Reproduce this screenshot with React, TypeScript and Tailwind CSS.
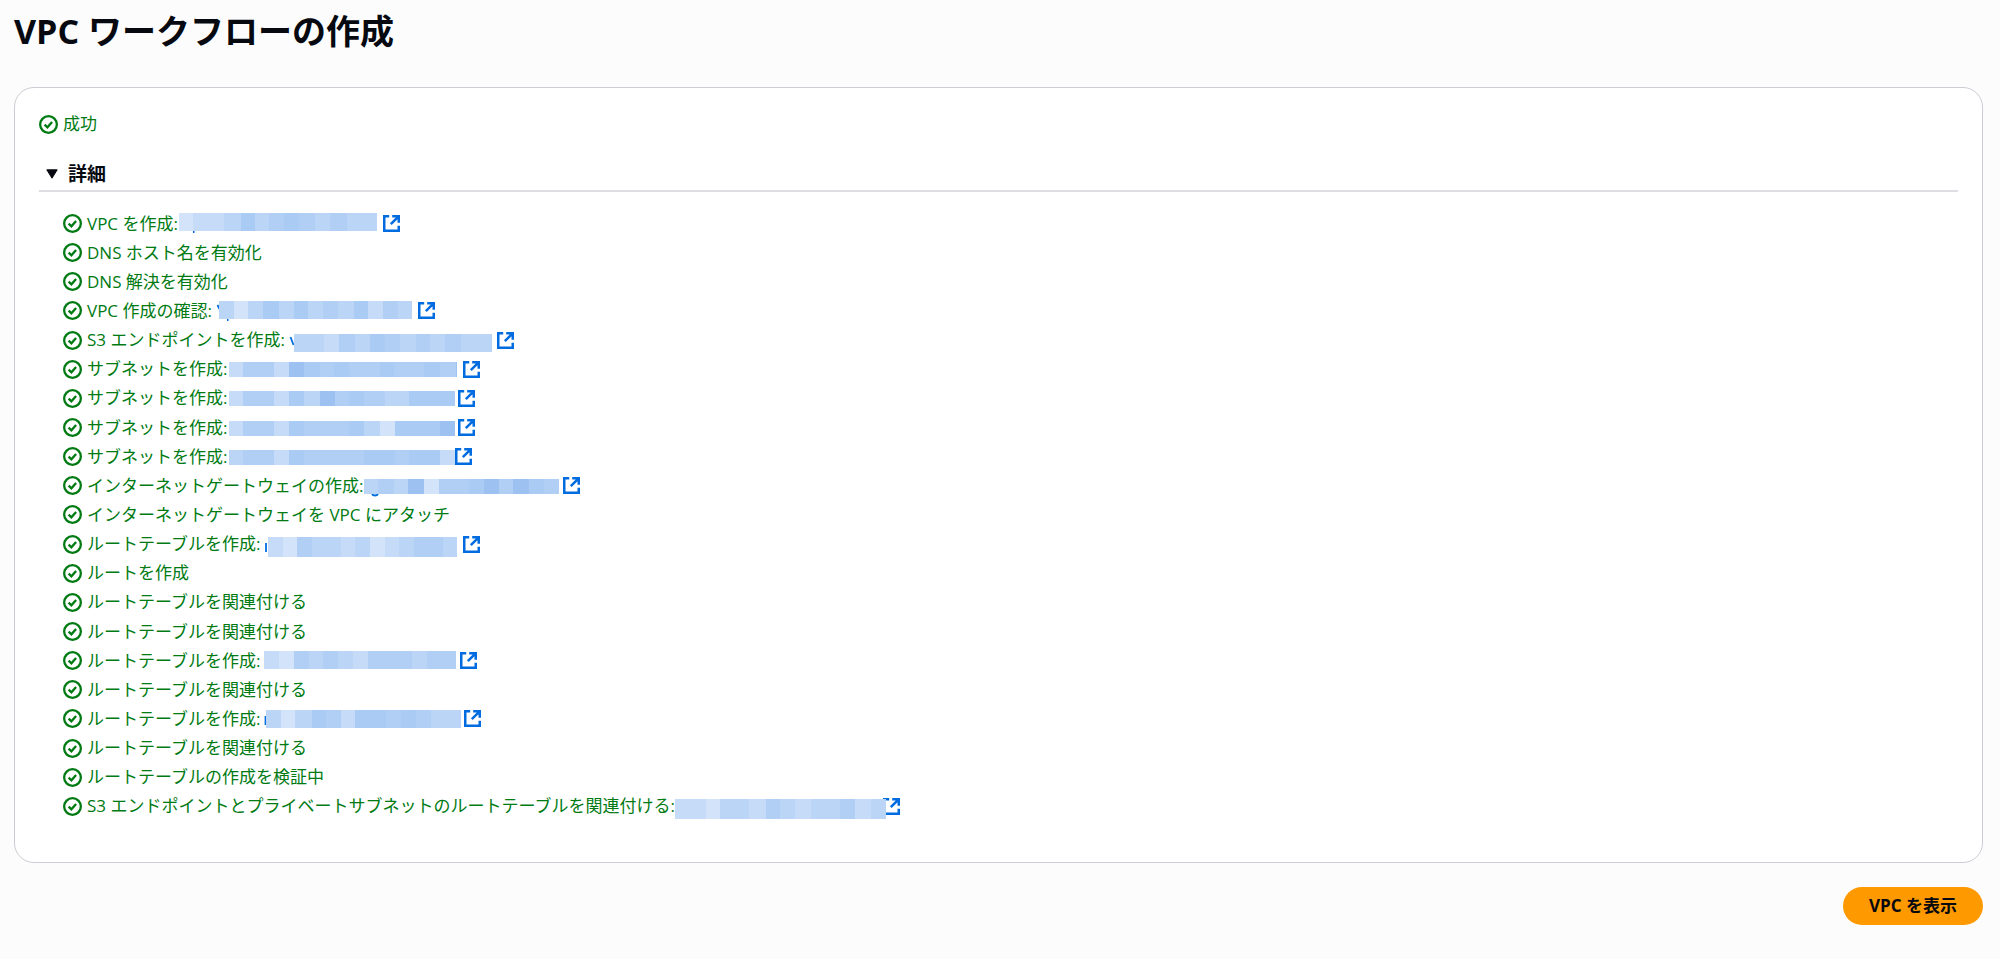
import React from "react";

type Cell = [edge: number, tone: string];

interface Masked {
  origin: number;
  top: number;
  height: number;
  cells: Cell[];
  end: number;
  iconAt: number;
  trace?: string;
}

interface Step {
  label: string;
  masked?: Masked;
}

const tones: Record<string, string> = {
  a: "#d3e4fa",
  b: "#c6dbf8",
  c: "#bbd5f6",
  d: "#b1cff5",
  e: "#a9cbf4",
  f: "#9dc2f1",
};

const steps: Step[] = [
  {
    label: "VPC を作成:",
    masked: {
      origin: 183, top: 4, height: 18, end: 377, iconAt: 383, trace: "M193 23h1.5",
      cells: [[179, "a"], [193, "b"], [209, "b"], [224, "c"], [241, "e"], [255, "c"], [269, "d"], [284, "e"], [299, "d"], [315, "c"], [330, "d"], [347, "c"]],
    },
  },
  { label: "DNS ホスト名を有効化" },
  { label: "DNS 解決を有効化" },
  {
    label: "VPC 作成の確認:",
    masked: {
      origin: 217, top: 5, height: 18, end: 412, iconAt: 418, trace: "M217.5 9l2 4M227 24h1.5",
      cells: [[219, "c"], [234, "a"], [248, "c"], [263, "e"], [279, "c"], [294, "e"], [308, "c"], [323, "d"], [338, "c"], [354, "e"], [368, "b"], [383, "d"], [398, "c"]],
    },
  },
  {
    label: "S3 エンドポイントを作成:",
    masked: {
      origin: 290, top: 8, height: 18, end: 492, iconAt: 497, trace: "M290.500 11l3 8",
      cells: [[294, "c"], [324, "b"], [339, "d"], [355, "c"], [370, "e"], [385, "d"], [400, "c"], [416, "d"], [430, "c"], [445, "d"], [461, "c"]],
    },
  },
  {
    label: "サブネットを作成:",
    masked: {
      origin: 233, top: 7, height: 15, end: 457, iconAt: 464, trace: "M456.500 7v15",
      cells: [[230, "b"], [244, "d"], [275, "b"], [290, "f"], [305, "e"], [321, "d"], [335, "e"], [350, "d"], [381, "e"], [395, "d"], [425, "e"], [441, "d"]],
    },
  },
  {
    label: "サブネットを作成:",
    masked: {
      origin: 233, top: 7, height: 15, end: 456, iconAt: 459,
      cells: [[230, "b"], [244, "d"], [275, "b"], [290, "e"], [305, "c"], [321, "f"], [336, "d"], [350, "e"], [365, "d"], [386, "c"], [410, "e"]],
    },
  },
  {
    label: "サブネットを作成:",
    masked: {
      origin: 233, top: 8, height: 15, end: 456, iconAt: 459,
      cells: [[230, "b"], [244, "d"], [275, "b"], [290, "e"], [305, "d"], [350, "e"], [365, "c"], [381, "a"], [396, "e"], [441, "f"]],
    },
  },
  {
    label: "サブネットを作成:",
    masked: {
      origin: 233, top: 8, height: 15, end: 456, iconAt: 456,
      cells: [[230, "c"], [244, "d"], [275, "b"], [290, "e"], [305, "d"], [365, "e"], [396, "d"], [410, "e"], [441, "b"]],
    },
  },
  {
    label: "インターネットゲートウェイの作成:",
    masked: {
      origin: 369, top: 8, height: 15, end: 560, iconAt: 564, trace: "M373 23c1 2 5 2 6 0",
      cells: [[365, "c"], [379, "d"], [395, "c"], [409, "f"], [425, "a"], [440, "d"], [454, "d"], [470, "e"], [485, "f"], [500, "d"], [514, "f"], [530, "e"], [545, "d"]],
    },
  },
  { label: "インターネットゲートウェイを VPC にアタッチ" },
  {
    label: "ルートテーブルを作成:",
    masked: {
      origin: 265, top: 7, height: 20, end: 457, iconAt: 463, trace: "M266 13v9",
      cells: [[268, "b"], [283, "a"], [297, "d"], [312, "c"], [341, "b"], [355, "c"], [370, "a"], [385, "b"], [399, "c"], [414, "d"], [429, "d"], [443, "c"]],
    },
  },
  { label: "ルートを作成" },
  { label: "ルートテーブルを関連付ける" },
  { label: "ルートテーブルを関連付ける" },
  {
    label: "ルートテーブルを作成:",
    masked: {
      origin: 265, top: 5, height: 18, end: 456, iconAt: 460,
      cells: [[264, "b"], [279, "a"], [294, "d"], [309, "c"], [323, "d"], [338, "c"], [353, "b"], [368, "d"], [397, "d"], [412, "c"], [427, "d"]],
    },
  },
  { label: "ルートテーブルを関連付ける" },
  {
    label: "ルートテーブルを作成:",
    masked: {
      origin: 265, top: 6, height: 18, end: 461, iconAt: 464, trace: "M265.500 12v9",
      cells: [[266, "c"], [281, "a"], [295, "c"], [312, "e"], [326, "d"], [341, "b"], [355, "e"], [386, "d"], [401, "e"], [416, "d"], [431, "c"], [446, "c"]],
    },
  },
  { label: "ルートテーブルを関連付ける" },
  { label: "ルートテーブルの作成を検証中" },
  {
    label: "S3 エンドポイントとプライベートサブネットのルートテーブルを関連付ける:",
    masked: {
      origin: 680, top: 7, height: 20, end: 886, iconAt: 883,
      cells: [[675, "b"], [690, "b"], [706, "a"], [720, "c"], [749, "b"], [766, "d"], [780, "c"], [795, "b"], [811, "c"], [826, "c"], [840, "d"], [855, "b"], [871, "c"]],
    },
  },
];

function SuccessIcon() {
  return (
    <svg viewBox="0 0 19 19" className="size-[19px] shrink-0" fill="none" stroke="currentColor" strokeWidth="2.300" aria-hidden="true">
      <circle cx="9.500" cy="9.500" r="8.350" />
      <path d="M5.600 9.600l2.800 2.700 4.700-5.400" />
    </svg>
  );
}

function MaskedLink({ masked, name }: { masked: Masked; name: string }) {
  const { origin, top, height, cells, end, iconAt, trace } = masked;
  const width = iconAt + 17 - origin;
  return (
    <a href="#resource" aria-label={`${name} 新しいタブで開く`} className="block shrink-0 text-[#006ce0]">
      <svg
        viewBox={`${origin} 0 ${width} 29`}
        width={width}
        height={29}
        className="block overflow-visible"
        fill="none"
        stroke="currentColor"
        strokeWidth="2.500"
        aria-hidden="true"
      >
        <g transform={`translate(${iconAt} 6)`}>
          <path d="M6.200 1.250H1.250V15.750H15.750V10.800" />
          <path d="M9.200 1.250H15.750V7.800M15.400 1.600L7.800 9.200" />
        </g>
        {trace && <path d={trace} strokeWidth="1.800" />}
        <g stroke="none">
          {cells.map(([x, tone], i) => (
            <rect key={x} x={x} y={top} width={(cells[i + 1]?.[0] ?? end) - x} height={height} fill={tones[tone]} />
          ))}
        </g>
      </svg>
    </a>
  );
}

export default function App() {
  return (
    <main
      lang="ja"
      className="min-h-screen bg-[#fcfcfd] pb-8 pl-[14px] pr-[17px] font-['Open_Sans','Noto_Sans_CJK_JP',sans-serif] text-[17px] leading-6 text-[#06090f]"
    >
      <h1 className="pt-[9px] text-[34px] font-bold leading-[44px]">VPC ワークフローの作成</h1>

      <section className="mt-[34px] rounded-[20px] border border-[#cbcdd3] bg-white px-6 pb-[41px] pt-6">
        <div className="flex items-center gap-[5px] text-[#007a12]">
          <SuccessIcon />
          <span>成功</span>
        </div>

        <button
          type="button"
          aria-expanded="true"
          className="mt-[22px] flex h-[34px] w-full items-center gap-[10px] border-b-2 border-[#dedee3] pl-[7px] text-left text-[19px] font-bold"
        >
          <svg viewBox="0 0 12 10" className="h-[10px] w-3" fill="currentColor" stroke="currentColor" strokeLinejoin="round" aria-hidden="true">
            <path d="M.8.800H11.200L6 9.200Z" />
          </svg>
          詳細
        </button>

        <ul className="mt-[17px] grid min-h-[612px] auto-rows-fr pl-6 text-[#007a12]">
          {steps.map((step, i) => (
            <li key={i} className="flex items-center gap-[5px] whitespace-nowrap">
              <SuccessIcon />
              <span>{step.label}</span>
              {step.masked && <MaskedLink masked={step.masked} name={step.label} />}
            </li>
          ))}
        </ul>
      </section>

      <div className="mt-6 flex justify-end">
        <button type="button" className="h-[38px] rounded-full bg-[#ff9900] px-[26px] text-[17px] font-bold">
          VPC を表示
        </button>
      </div>
    </main>
  );
}
